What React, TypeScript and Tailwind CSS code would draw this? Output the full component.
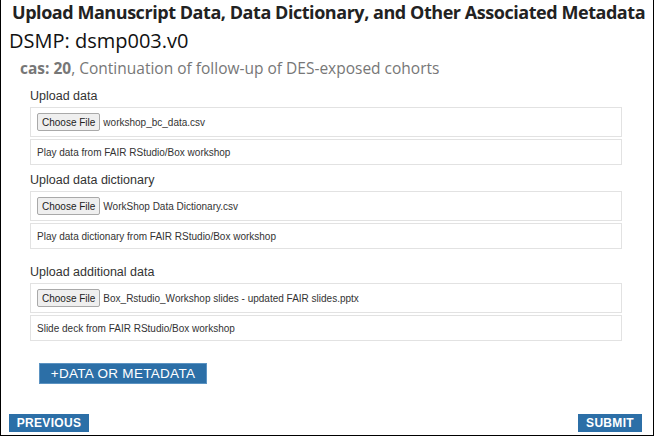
import React from "react";

const sections = [
  { label: "Upload data", file: "workshop_bc_data.csv", desc: "Play data from FAIR RStudio/Box workshop", mt: "mt-[10px]" },
  { label: "Upload data dictionary", file: "WorkShop Data Dictionary.csv", desc: "Play data dictionary from FAIR RStudio/Box workshop", mt: "mt-[7px]" },
  { label: "Upload additional data", file: "Box_Rstudio_Workshop slides - updated FAIR slides.pptx", desc: "Slide deck from FAIR RStudio/Box workshop", mt: "mt-[15px]" },
];

function FileRow({ file }: { file: string }) {
  return (
    <div className="h-[30px] border border-[#e2e2e2] flex items-center pl-[6px]">
      <span className="h-[18px] px-[4px] flex items-center text-[10px] text-[#222] bg-[#efefef] border border-[#a9a9a9] rounded-[2px]">
        Choose File
      </span>
      <span className="ml-[3px] text-[10px] text-[#333]">{file}</span>
    </div>
  );
}

export default function App() {
  return (
    <div className="w-[655px] h-[437px] bg-white">
      <div className="w-[654px] h-[436px] border-x border-b border-black flex flex-col" style={{ fontFamily: '"Liberation Sans", Arial, sans-serif' }}>
        <h1 className="pl-[11px] text-[18px] leading-[24px] font-bold text-[#222] tracking-[-0.45px]" style={{ fontFamily: '"Open Sans", sans-serif' }}>
          Upload Manuscript Data, Data Dictionary, and Other Associated Metadata
        </h1>
        <p className="pl-[8px] mt-[4px] text-[20px] leading-[25px] text-[#111]" style={{ fontFamily: '"Open Sans", sans-serif' }}>
          DSMP: dsmp003.v0
        </p>
        <p className="pl-[19px] mt-[5px] text-[15.5px] leading-[20px] text-[#777]" style={{ fontFamily: '"Open Sans", sans-serif' }}>
          <span className="font-bold">cas: 20</span>, Continuation of follow-up of DES-exposed cohorts
        </p>

        <div className="pl-[29px] pr-[31px]">
          {sections.map((s) => (
            <div key={s.label} className={s.mt}>
              <p className="text-[12.5px] leading-[16px] text-[#333]">{s.label}</p>
              <div className="mt-[3px] flex flex-col gap-[2px]">
                <FileRow file={s.file} />
                <div className="h-[26px] border border-[#e2e2e2] flex items-center pl-[6px] text-[10px] text-[#333]">
                  {s.desc}
                </div>
              </div>
            </div>
          ))}
          <button className="mt-[22px] ml-[9px] h-[21px] w-[168px] bg-[#2c6fa7] text-white text-[13.5px] tracking-[0.3px] border border-[#5b93c2]">
            +DATA OR METADATA
          </button>
        </div>

        <div className="mt-auto mb-[3px] px-[8px] pr-[11px] flex justify-between">
          <button className="h-[18px] w-[80px] bg-[#2c6fa7] text-white text-[12px] font-bold tracking-[0.3px]">PREVIOUS</button>
          <button className="h-[18px] w-[64px] bg-[#2c6fa7] text-white text-[12px] font-bold tracking-[0.3px]">SUBMIT</button>
        </div>
      </div>
    </div>
  );
}
